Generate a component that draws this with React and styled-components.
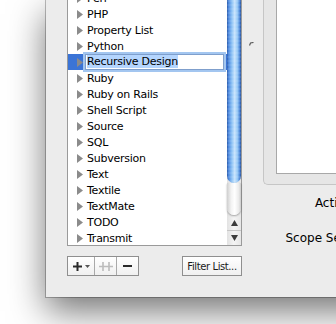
import React from "react";
import styled, { createGlobalStyle } from "styled-components";

const Global = createGlobalStyle`
  html, body { margin: 0; padding: 0; background: #fff; }
  body { overflow: hidden; font-family: "DejaVu Sans", "Lucida Grande", sans-serif; }
`;

const Page = styled.div`
  width: 336px;
  height: 324px;
  overflow: hidden;
  padding-left: 46px;
  box-sizing: border-box;
  background: #fff;
`;

const Window = styled.div`
  width: 340px;
  height: 297px;
  background: #ececec;
  display: flex;
  padding-left: 21px;
  box-sizing: border-box;
  box-shadow: 0 0 0 1px rgba(0, 0, 0, 0.25), 0 14px 34px rgba(0, 0, 0, 0.55);
`;

const LeftColumn = styled.div`
  width: 175px;
  flex-shrink: 0;
  display: flex;
  flex-direction: column;
`;

const ListBox = styled.div`
  height: 246px;
  box-sizing: border-box;
  border: 1px solid #9a9a9a;
  border-top: none;
  display: flex;
  background: #fff;
`;

const Rows = styled.div`
  flex: 1;
  overflow: hidden;
`;

const RowsInner = styled.div`
  margin-top: -10px;
`;

const Row = styled.div`
  height: 16px;
  display: flex;
  align-items: center;
  padding-left: 9px;
  background: ${(p) => (p.$selected ? "#3b74d6" : "transparent")};
  font-size: 11px;
  letter-spacing: -0.25px;
  color: #000;
  white-space: nowrap;
`;

const Label = styled.span`
  margin-left: 4px;
`;

const Editor = styled.div`
  margin-left: 2px;
  margin-top: -1px;
  width: 139px;
  height: 16px;
  box-sizing: border-box;
  background: #fff;
  border: 1px solid #7f9fcc;
  box-shadow: 0 0 0 2px #a3c6f0;
  padding-left: 1px;
  display: flex;
  align-items: center;
`;

const Selection = styled.span`
  background: #b4d5fe;
  line-height: 13px;
`;

const Scroller = styled.div`
  width: 14px;
  flex-shrink: 0;
  display: flex;
  flex-direction: column;
  background: linear-gradient(to right, #e2e2e2, #f4f4f4 50%, #e6e6e6);
`;

const Thumb = styled.div`
  height: 183px;
  flex-shrink: 0;
  border-radius: 0 0 7px 7px;
  background:
    repeating-linear-gradient(to bottom, rgba(255, 255, 255, 0.08) 0 2px, rgba(0, 0, 0, 0) 2px 4px),
    linear-gradient(to right, #2c5aa8 0%, #4f8be0 12%, #8ec3f5 35%, #c8e4fd 55%, #94c6f4 75%, #4e88d8 90%, #27519a 100%);
`;

const Track = styled.div`
  flex: 1;
  border-radius: 0 0 7px 7px;
  background: linear-gradient(to right, #cfcfcf, #f3f3f3 30%, #fff 55%, #eaeaea 85%, #cbcbcb);
  box-shadow: 0 1px 2px rgba(0, 0, 0, 0.35);
`;

const ArrowButton = styled.div`
  height: ${(p) => p.$h}px;
  flex-shrink: 0;
  display: flex;
  align-items: center;
  justify-content: center;
  border-top: ${(p) => (p.$divided ? "1px solid #c6c6c6" : "none")};
  box-sizing: border-box;
`;

const ButtonRow = styled.div`
  margin-top: 10px;
  height: 20px;
  display: flex;
  justify-content: space-between;
`;

const Segmented = styled.div`
  width: 72px;
  height: 20px;
  box-sizing: border-box;
  display: flex;
  border: 1px solid #8f8f8f;
  background: linear-gradient(#ffffff, #f0f0f0);
`;

const Segment = styled.div`
  width: ${(p) => p.$w}px;
  height: 100%;
  display: flex;
  align-items: center;
  justify-content: center;
  gap: 3px;
  border-left: ${(p) => (p.$first ? "none" : "1px solid #a9a9a9")};
`;

const PushButton = styled.div`
  width: 60px;
  height: 20px;
  box-sizing: border-box;
  border: 1px solid #8f8f8f;
  background: linear-gradient(#ffffff, #f0f0f0);
  display: flex;
  align-items: center;
  justify-content: center;
  font-size: 10px;
  letter-spacing: -0.4px;
  color: #1a1a1a;
`;

const Splitter = styled.div`
  width: 21px;
  flex-shrink: 0;
  padding: 31px 0 0 7px;
  box-sizing: border-box;
`;

const RightColumn = styled.div`
  flex: 1;
  display: flex;
  flex-direction: column;
`;

const GroupBox = styled.div`
  height: 185px;
  box-sizing: border-box;
  border-left: 1px solid #c6c6c6;
  border-bottom: 1px solid #c6c6c6;
  border-bottom-left-radius: 5px;
  background: #e6e6e6;
  padding: 0 0 11px 12px;
`;

const TextArea = styled.div`
  height: 100%;
  background: #fff;
  border-left: 1px solid #a8a8a8;
  border-bottom: 1px solid #a8a8a8;
`;

const Fields = styled.div`
  display: flex;
  flex-direction: column;
  align-items: flex-end;
  gap: 19px;
  margin-top: 10px;
  padding-right: 7px;
`;

const FieldLabel = styled.div`
  font-size: 12px;
  line-height: 16px;
  color: #000;
  white-space: nowrap;
`;

const Disclosure = () => (
  <svg width="6" height="9" viewBox="0 0 6 9">
    <polygon points="0,0 6,4.5 0,9" fill="#8b8b8b" />
  </svg>
);

const items = [
  "Perl", "PHP", "Property List", "Python", "Recursive Design", "Ruby",
  "Ruby on Rails", "Shell Script", "Source", "SQL", "Subversion", "Text",
  "Textile", "TextMate", "TODO", "Transmit",
];

export default function App() {
  return (
    <>
      <Global />
      <Page>
        <Window>
          <LeftColumn>
            <ListBox>
              <Rows>
                <RowsInner>
                  {items.map((name) =>
                    name === "Recursive Design" ? (
                      <Row key={name} $selected>
                        <Disclosure />
                        <Editor>
                          <Selection>{name}</Selection>
                        </Editor>
                      </Row>
                    ) : (
                      <Row key={name}>
                        <Disclosure />
                        <Label>{name}</Label>
                      </Row>
                    )
                  )}
                </RowsInner>
              </Rows>
              <Scroller>
                <Thumb />
                <Track />
                <ArrowButton $h={15}>
                  <svg width="7" height="6" viewBox="0 0 7 6">
                    <polygon points="3.5,0 7,6 0,6" fill="#3c3c3c" />
                  </svg>
                </ArrowButton>
                <ArrowButton $h={15} $divided>
                  <svg width="7" height="6" viewBox="0 0 7 6">
                    <polygon points="0,0 7,0 3.5,6" fill="#3c3c3c" />
                  </svg>
                </ArrowButton>
              </Scroller>
            </ListBox>
            <ButtonRow>
              <Segmented>
                <Segment $w={26} $first>
                  <svg width="9" height="9" viewBox="0 0 9 9">
                    <path d="M4.5 0v9M0 4.5h9" stroke="#2a2a2a" strokeWidth="2" />
                  </svg>
                  <svg width="5" height="3" viewBox="0 0 5 3">
                    <polygon points="0,0 5,0 2.5,3" fill="#555" />
                  </svg>
                </Segment>
                <Segment $w={21}>
                  <svg width="14" height="9" viewBox="0 0 14 9">
                    <path d="M4 0v9M0 4.5h8M10 0v9M6 4.5h8" stroke="#bcbcbc" strokeWidth="1.6" />
                  </svg>
                </Segment>
                <Segment $w={21}>
                  <svg width="9" height="2" viewBox="0 0 9 2">
                    <rect width="9" height="2" fill="#2a2a2a" />
                  </svg>
                </Segment>
              </Segmented>
              <PushButton>Filter List...</PushButton>
            </ButtonRow>
          </LeftColumn>
          <Splitter>
            <svg width="5" height="4" viewBox="0 0 5 4">
              <path d="M0.5 3.5 L1.5 1 L4.5 0.5" stroke="#555" strokeWidth="1.2" fill="none" />
            </svg>
          </Splitter>
          <RightColumn>
            <GroupBox>
              <TextArea />
            </GroupBox>
            <Fields>
              <FieldLabel>Activation:</FieldLabel>
              <FieldLabel>Scope Selector:</FieldLabel>
            </Fields>
          </RightColumn>
        </Window>
      </Page>
    </>
  );
}
